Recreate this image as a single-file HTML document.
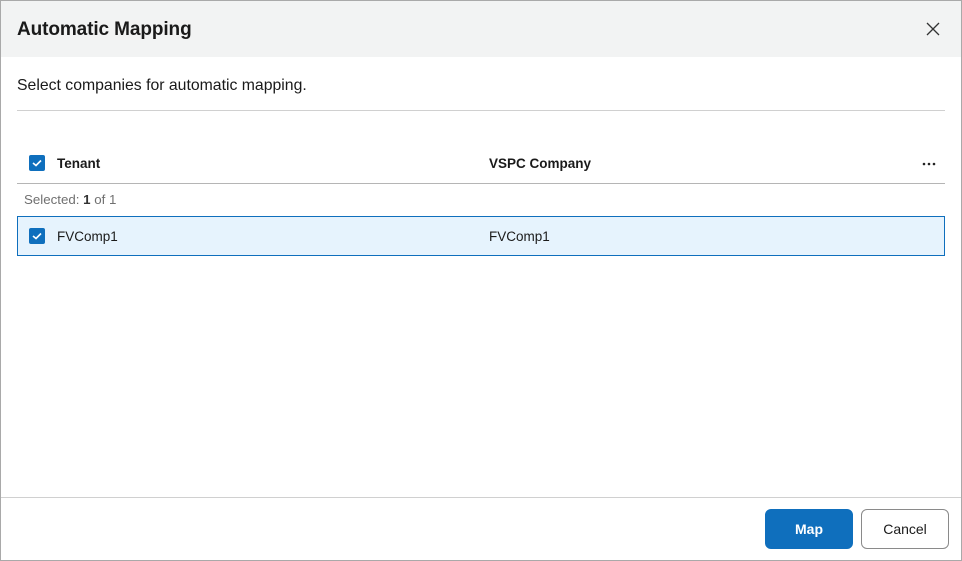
<!DOCTYPE html>
<html><head><meta charset="utf-8"><style>
*{box-sizing:border-box;margin:0;padding:0}
html,body{width:962px;height:561px;overflow:hidden;background:#fff;font-family:"Liberation Sans",sans-serif;color:#1a1a1a}
.frame{position:absolute;left:0;top:0;width:962px;height:561px;border:1px solid #a9a9a9}
.hdr{position:absolute;left:1px;top:1px;width:960px;height:56px;background:#f2f3f3}
.title{position:absolute;left:17px;top:19px;font-size:19px;font-weight:bold;letter-spacing:-0.1px}
.x{position:absolute;left:926px;top:22px}
.sub{position:absolute;left:17px;top:77px;font-size:15.8px}
.line{position:absolute;height:1px;background:#d0d0d0}
.cb{position:absolute;width:16px;height:16px;background:#0f6fbd;border-radius:2px}
.cb svg{position:absolute;left:3px;top:4px}
.th{position:absolute;top:156px;font-size:13.5px;font-weight:bold}
.sel{position:absolute;left:24px;top:192px;font-size:13.3px;color:#707070}
.row{position:absolute;left:17px;top:216px;width:928px;height:40px;background:#e6f3fd;border:1px solid #0f6fbd}
.td{position:absolute;top:229px;font-size:13.5px}
.btn{position:absolute;top:509px;width:88px;height:40px;border-radius:6px;font-size:14px;text-align:center;line-height:38px}
.map{left:765px;background:#0f6fbd;color:#fff;font-weight:bold;border:1px solid #0f6fbd}
.cancel{left:861px;border:1px solid #8a8a8a;color:#1a1a1a}
</style></head><body>
<div class="frame"></div>
<div class="hdr"></div>
<div class="title">Automatic Mapping</div>
<svg class="x" width="14" height="14" viewBox="0 0 14 14"><path d="M1 1L13 13M13 1L1 13" stroke="#333" stroke-width="1.3"/></svg>
<div class="sub">Select companies for automatic mapping.</div>
<div class="line" style="left:17px;top:110px;width:928px"></div>
<div class="cb" style="left:29px;top:155px"><svg width="10" height="8" viewBox="0 0 10 8"><path d="M1 4L4 6.5L9 1.5" stroke="#fff" stroke-width="1.6" fill="none"/></svg></div>
<div class="th" style="left:57px">Tenant</div>
<div class="th" style="left:489px">VSPC Company</div>
<svg style="position:absolute;left:922px;top:162px" width="14" height="4"><circle cx="2" cy="2" r="1.3" fill="#222"/><circle cx="7" cy="2" r="1.3" fill="#222"/><circle cx="12" cy="2" r="1.3" fill="#222"/></svg>
<div class="line" style="left:17px;top:183px;width:928px;background:#b5b5b5"></div>
<div class="sel">Selected: <b style="color:#333">1</b> of 1</div>
<div class="row"></div>
<div class="cb" style="left:29px;top:228px"><svg width="10" height="8" viewBox="0 0 10 8"><path d="M1 4L4 6.5L9 1.5" stroke="#fff" stroke-width="1.6" fill="none"/></svg></div>
<div class="td" style="left:57px">FVComp1</div>
<div class="td" style="left:489px">FVComp1</div>
<div class="line" style="left:1px;top:497px;width:960px"></div>
<div class="btn map">Map</div>
<div class="btn cancel">Cancel</div>
</body></html>
